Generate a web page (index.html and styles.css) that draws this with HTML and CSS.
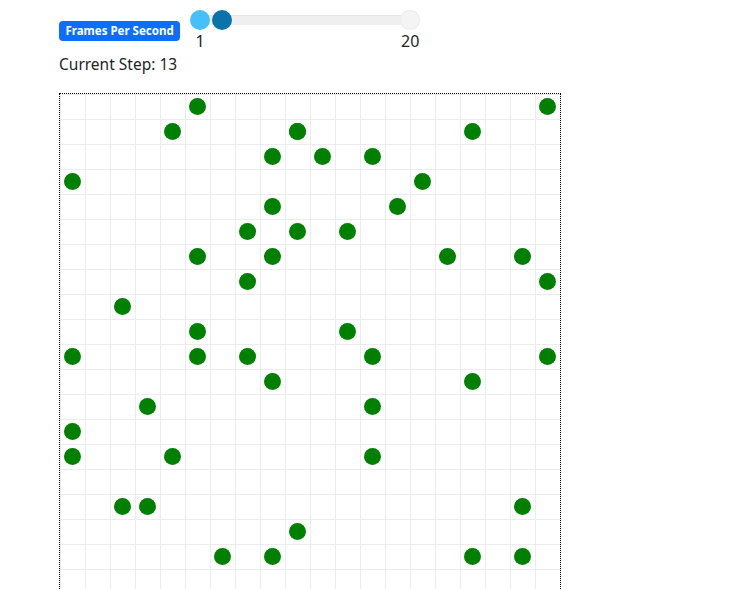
FILE: index.html
```html
<!DOCTYPE html>
<html>
<head>
<meta charset="utf-8">
<link rel="stylesheet" href="styles.css">
</head>
<body>
<div class="app">
  <div class="controls">
    <span class="badge">Frames Per Second</span>
    <div class="slider">
      <div class="track-row">
        <div class="rail"></div>
        <div class="dot dot-start"></div>
        <div class="dot dot-end"></div>
        <div class="handle"></div>
      </div>
      <div class="labels"><span class="mark">1</span><span class="mark">20</span></div>
    </div>
  </div>
  <div class="step">Current Step: 13</div>
  <div class="board">
    <div class="agent" style="grid-area:1/6"></div>
    <div class="agent" style="grid-area:1/20"></div>
    <div class="agent" style="grid-area:2/5"></div>
    <div class="agent" style="grid-area:2/10"></div>
    <div class="agent" style="grid-area:2/10"></div>
    <div class="agent" style="grid-area:2/17"></div>
    <div class="agent" style="grid-area:3/9"></div>
    <div class="agent" style="grid-area:3/11"></div>
    <div class="agent" style="grid-area:3/13"></div>
    <div class="agent" style="grid-area:4/1"></div>
    <div class="agent" style="grid-area:4/15"></div>
    <div class="agent" style="grid-area:5/9"></div>
    <div class="agent" style="grid-area:5/14"></div>
    <div class="agent" style="grid-area:6/8"></div>
    <div class="agent" style="grid-area:6/10"></div>
    <div class="agent" style="grid-area:6/12"></div>
    <div class="agent" style="grid-area:7/6"></div>
    <div class="agent" style="grid-area:7/9"></div>
    <div class="agent" style="grid-area:7/16"></div>
    <div class="agent" style="grid-area:7/19"></div>
    <div class="agent" style="grid-area:8/8"></div>
    <div class="agent" style="grid-area:8/20"></div>
    <div class="agent" style="grid-area:9/3"></div>
    <div class="agent" style="grid-area:10/6"></div>
    <div class="agent" style="grid-area:10/12"></div>
    <div class="agent" style="grid-area:11/1"></div>
    <div class="agent" style="grid-area:11/6"></div>
    <div class="agent" style="grid-area:11/8"></div>
    <div class="agent" style="grid-area:11/13"></div>
    <div class="agent" style="grid-area:11/20"></div>
    <div class="agent" style="grid-area:12/9"></div>
    <div class="agent" style="grid-area:12/17"></div>
    <div class="agent" style="grid-area:13/4"></div>
    <div class="agent" style="grid-area:13/13"></div>
    <div class="agent" style="grid-area:14/1"></div>
    <div class="agent" style="grid-area:15/1"></div>
    <div class="agent" style="grid-area:15/5"></div>
    <div class="agent" style="grid-area:15/13"></div>
    <div class="agent" style="grid-area:17/3"></div>
    <div class="agent" style="grid-area:17/4"></div>
    <div class="agent" style="grid-area:17/19"></div>
    <div class="agent" style="grid-area:18/10"></div>
    <div class="agent" style="grid-area:19/7"></div>
    <div class="agent" style="grid-area:19/9"></div>
    <div class="agent" style="grid-area:19/17"></div>
    <div class="agent" style="grid-area:19/19"></div>
  </div>
</div>
</body>
</html>
```

FILE: styles.css
```css
html, body {
  margin: 0;
  background: #fff;
}
body {
  font-family: "Noto Sans", "Open Sans", sans-serif;
  color: #212529;
}
.app {
  padding: 10px 0 0 59px;
}
.controls {
  display: flex;
  align-items: center;
  gap: 10px;
}
.badge {
  display: inline-block;
  background: #0d6efd;
  color: #fff;
  font-weight: 700;
  font-size: 11.5px;
  line-height: 14px;
  padding: 3px 6.5px;
  border-radius: 4px;
  white-space: nowrap;
}
.slider {
  width: 230px;
}
.track-row {
  position: relative;
  height: 20px;
}
.rail {
  position: absolute;
  left: 10px;
  right: 10px;
  top: 5px;
  height: 10px;
  border-radius: 5px;
  background: #efefef;
  box-shadow: inset 0 1px 1px rgba(0,0,0,0.04);
}
.dot, .handle {
  position: absolute;
  top: 0;
  width: 20px;
  height: 20px;
  border-radius: 50%;
}
.dot-start {
  left: 0;
  background: #45c0fa;
}
.dot-end {
  right: 0;
  background: #f4f4f4;
  box-shadow: 0 0 0 1px #ececec inset;
}
.handle {
  left: 22px;
  background: #0a74aa;
}
.labels {
  display: flex;
  justify-content: space-between;
  margin-top: 1px;
  font-size: 16px;
  line-height: 20px;
}
.mark {
  width: 20px;
  text-align: center;
}
.step {
  margin-top: 3px;
  font-size: 15.5px;
  line-height: 20px;
}
.board {
  margin-top: 19px;
  width: 500px;
  border: 1px dotted #000;
  display: grid;
  grid-template-columns: repeat(20, 25px);
  grid-template-rows: repeat(20, 25px);
  background-image:
    linear-gradient(to right, transparent 24px, #ececec 24px),
    linear-gradient(to bottom, transparent 24px, #ececec 24px);
  background-size: 25px 25px;
  background-position: 1px 0, 0 1px;
}
.agent {
  width: 17px;
  height: 17px;
  border-radius: 50%;
  background: #008000;
  justify-self: center;
  align-self: center;
}
```
